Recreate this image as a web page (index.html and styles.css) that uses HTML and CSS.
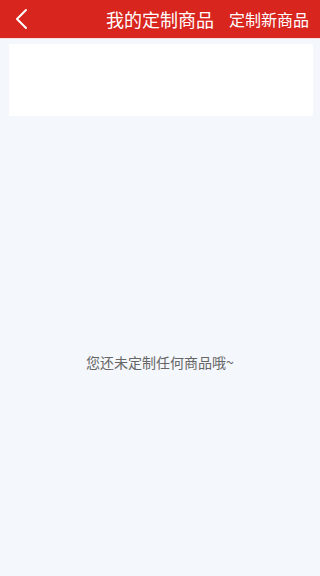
FILE: index.html
```html
<!DOCTYPE html>
<html lang="zh-CN">
  <head>
    <meta charset="UTF-8" />
    <meta name="viewport" content="width=device-width, initial-scale=1.0" />
    <title>我的定制商品</title>
    <link rel="stylesheet" href="styles.css">
  </head>
  <body>
    <div class="page">
      <div class="top-bar">
        <a class="back-btn" href="#">
          <svg width="14" height="22" viewBox="0 0 14 22">
            <path d="M12 2 L3 11 L12 20" fill="none" stroke="#fff" stroke-width="2" stroke-linecap="round" stroke-linejoin="round" />
          </svg>
        </a>
        <div class="title">我的定制商品</div>
        <a class="new-btn" href="#">定制新商品</a>
      </div>

      <div class="card"></div>

      <div class="empty-tip">您还未定制任何商品哦~</div>
    </div>
  </body>
</html>
```

FILE: styles.css
```css
body {
  margin: 0;
  background-color: #f4f7fb;
  font-family: "Noto Sans CJK SC", "Noto Sans", sans-serif;
}
.page {
  height: 576px;
  display: flex;
  flex-direction: column;
}
.top-bar {
  height: 38px;
  background-color: #d8261f;
  border-bottom: 1px solid #f6dede;
  display: flex;
  align-items: center;
  color: #fff;
}
.back-btn {
  display: flex;
  align-items: center;
  padding-left: 14px;
  width: 92px;
}
.title {
  font-size: 18px;
  line-height: 38px;
  flex: 1;
}
.new-btn {
  color: #fff;
  text-decoration: none;
  font-size: 16px;
  padding-right: 11px;
}
.card {
  background-color: #fff;
  margin: 5px 7px 0 9px;
  height: 72px;
}
.empty-tip {
  flex: 1;
  display: flex;
  align-items: center;
  justify-content: center;
  padding-top: 32px;
  font-size: 14px;
  color: #666;
}
```
